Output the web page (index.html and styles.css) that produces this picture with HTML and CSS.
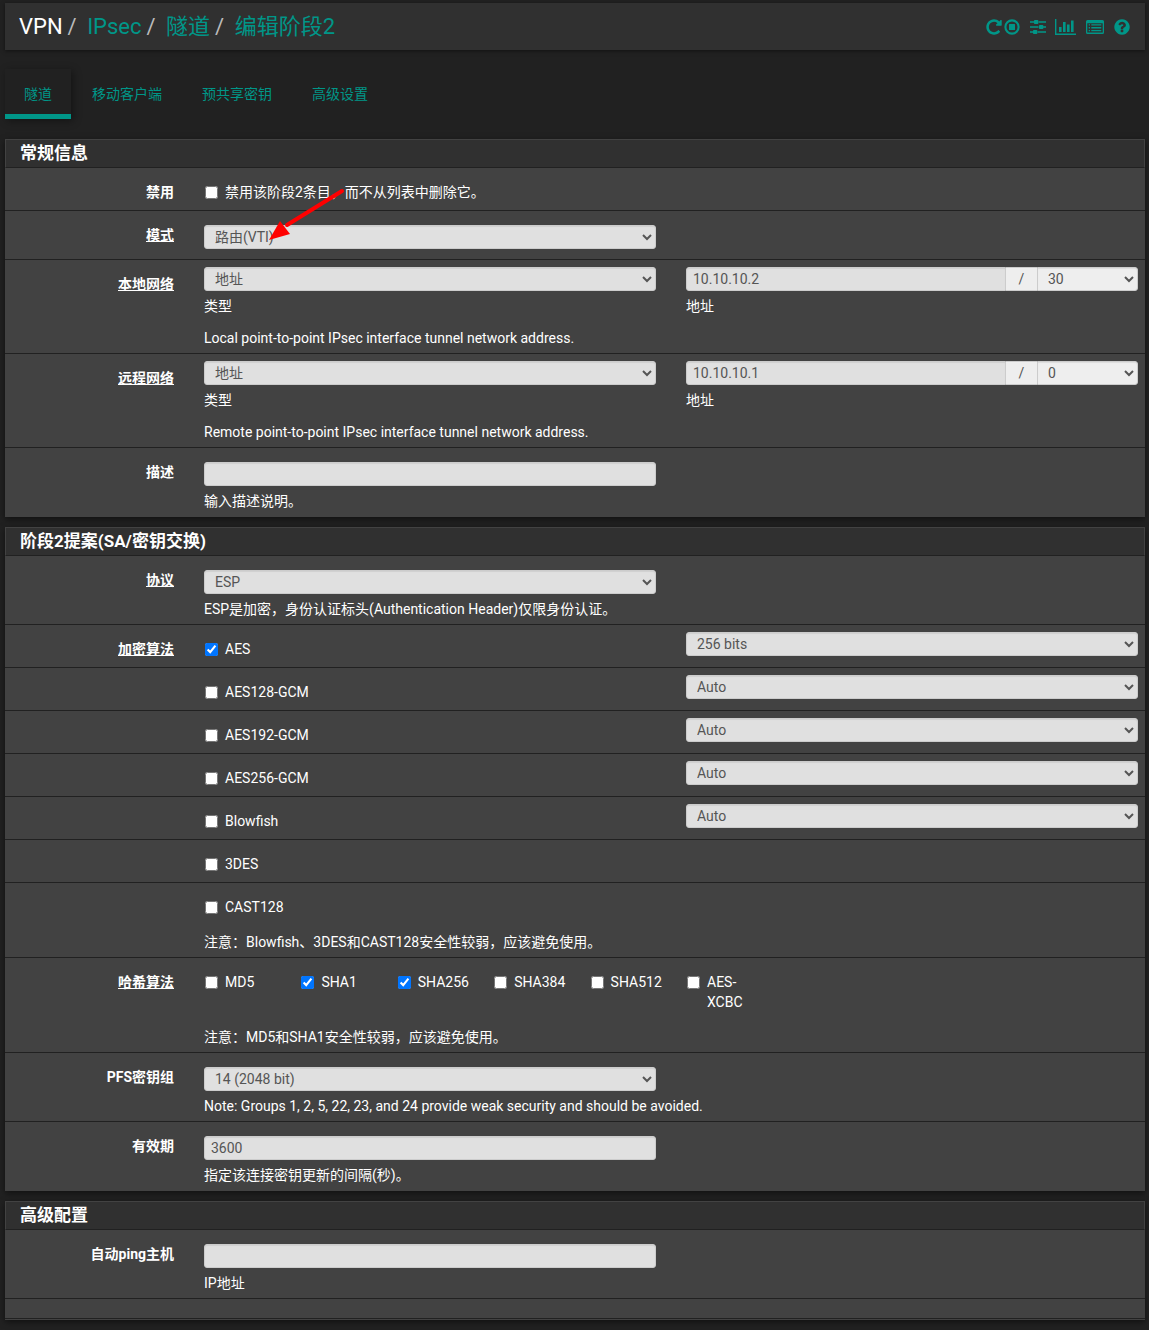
FILE: index.html
```html
<!doctype html>
<html lang="zh-CN">
    <head>
        <meta charset="utf-8">
        <meta name="viewport" content="width=device-width, initial-scale=1">
        <title>VPN: IPsec: 隧道: 编辑阶段2</title>
        <link rel="stylesheet" href="styles.css">
    </head>
    <body>
        <header class="header">
            <ol class="breadcrumb">
                <li>VPN</li>
                <li><a href="#">IPsec</a></li>
                <li><a href="#">隧道</a></li>
                <li><a href="#">编辑阶段2</a></li>
            </ol>
            <nav class="context-links">
                <a href="#" class="icon-restart" title="重启服务"><svg width="18" height="18" viewBox="0 0 1792 1792"><path d="M1664 256v448q0 26-19 45t-45 19h-448q-42 0-59-40-17-39 14-69l138-138q-148-137-349-137-104 0-198.5 40.5t-163.5 109.5-109.5 163.5-40.5 198.5 40.5 198.5 109.5 163.5 163.5 109.5 198.5 40.5q119 0 225-52t179-147q7-10 23-12 15 0 25 9l137 138q9 8 9.5 20.5t-7.5 22.5q-109 132-264 204.5t-327 72.5q-156 0-298-61t-245-164-164-245-61-298 61-298 164-245 245-164 298-61q147 0 284.5 55.5t244.5 156.5l130-129q29-31 70-14 39 17 39 59z"/></svg></a>
                <a href="#" class="icon-stop" title="停止服务"><svg width="18" height="18" viewBox="0 0 18 18"><circle cx="9" cy="9" r="6.6" fill="none" stroke="currentColor" stroke-width="2.1"/><rect x="6" y="6" width="6" height="6" rx=".5"/></svg></a>
                <a href="#" class="icon-sliders" title="相关设置"><svg width="18" height="18" viewBox="0 0 18 18"><path d="M1 3.2h4v1.6H1zM9.500 3.200H17v1.600H9.500zM1 8.200h8.500v1.600H1zM14 8.200h3v1.600h-3zM1 13.200h3v1.600H1zM8.500 13.200H17v1.600H8.500z"/><rect x="5" y="2" width="4.300" height="4" rx=".8"/><rect x="10" y="7" width="4.300" height="4" rx=".8"/><rect x="4" y="12" width="4.300" height="4" rx=".8"/></svg></a>
                <a href="#" class="icon-chart" title="状态"><svg width="21" height="18" viewBox="0 0 21 18"><path d="M0 1h1.400v14.600H21V17H0zM4 9h2.600v5H4zM8 4h2.600v10H8zM12 6.500h2.600V14H12zM16 2.500h2.600V14H16z"/></svg></a>
                <a href="#" class="icon-log" title="日志"><svg width="18" height="18" viewBox="0 0 18 18"><path fill-rule="evenodd" d="M1.500 2h15A1.500 1.500 0 0 1 18 3.500v11a1.500 1.500 0 0 1-1.500 1.500h-15A1.500 1.500 0 0 1 0 14.500v-11A1.500 1.500 0 0 1 1.500 2zM1.300 5.300v9.100h15.400V5.300z"/><path d="M2.700 6.300H4v1.300H2.700zM5.300 6.300h10v1.300h-10zM2.700 9.100H4v1.300H2.700zM5.300 9.100h10v1.300h-10zM2.700 11.900H4v1.300H2.700zM5.300 11.900h10v1.300h-10z"/></svg></a>
                <a href="#" class="icon-help" title="帮助"><svg width="18" height="18" viewBox="0 0 1792 1792"><path d="M1024 1376v-192q0-14-9-23t-23-9h-192q-14 0-23 9t-9 23v192q0 14 9 23t23 9h192q14 0 23-9t9-23zm256-672q0-88-55.5-163t-138.5-116-170-41q-243 0-371 213-15 24 8 42l132 100q7 6 19 6 16 0 25-12 53-68 86-92 34-24 86-24 48 0 85.5 26t37.5 59q0 38-20 61t-68 45q-63 28-115.5 86.5t-52.5 125.5v36q0 14 9 23t23 9h192q14 0 23-9t9-23q0-19 21.5-49.5t54.5-49.5q32-18 49-28.5t46-35 44.5-48 28-60.5 12.5-81zm384 192q0 209-103 385.5t-279.5 279.5-385.5 103-385.5-103-279.5-279.5-103-385.5 103-385.5 279.5-279.5 385.5-103 385.5 103 279.5 279.5 103 385.5z"/></svg></a>
            </nav>
        </header>

        <ul class="tabs">
            <li class="active"><a href="#">隧道</a></li>
            <li><a href="#">移动客户端</a></li>
            <li><a href="#">预共享密钥</a></li>
            <li><a href="#">高级设置</a></li>
        </ul>

        <form>
            <section class="panel">
                <h2>常规信息</h2>
                <div class="row">
                    <span class="name">禁用</span>
                    <div class="field wide">
                        <label class="check"><input type="checkbox"> 禁用该阶段2条目，而不从列表中删除它。</label>
                    </div>
                </div>
                <div class="row mode">
                    <label class="name required" for="mode">模式</label>
                    <div class="field spaced">
                        <select id="mode"><option>路由(VTI)</option></select>
                        <svg class="arrow" width="80" height="56" viewBox="0 0 80 56"><path d="M73 3L18 37" stroke="#f00" stroke-width="4" stroke-linecap="round"/><path d="M0 52L11 33L21 46z" fill="#f00"/></svg>
                    </div>
                </div>
                <div class="row">
                    <label class="name required" for="localtype">本地网络</label>
                    <div class="field">
                        <select id="localtype"><option>地址</option></select>
                        <span class="help">类型</span>
                    </div>
                    <div class="field">
                        <div class="input-group">
                            <input type="text" id="localaddr" value="10.10.10.2">
                            <span class="addon">/</span>
                            <select aria-label="掩码"><option>30</option></select>
                        </div>
                        <label class="help" for="localaddr">地址</label>
                    </div>
                    <p class="note">Local point-to-point IPsec interface tunnel network address.</p>
                </div>
                <div class="row">
                    <label class="name required" for="remotetype">远程网络</label>
                    <div class="field">
                        <select id="remotetype"><option>地址</option></select>
                        <span class="help">类型</span>
                    </div>
                    <div class="field">
                        <div class="input-group">
                            <input type="text" id="remoteaddr" value="10.10.10.1">
                            <span class="addon">/</span>
                            <select aria-label="掩码"><option>0</option></select>
                        </div>
                        <label class="help" for="remoteaddr">地址</label>
                    </div>
                    <p class="note">Remote point-to-point IPsec interface tunnel network address.</p>
                </div>
                <div class="row">
                    <label class="name" for="descr">描述</label>
                    <div class="field spaced">
                        <input type="text" id="descr">
                        <span class="help">输入描述说明。</span>
                    </div>
                </div>
            </section>

            <section class="panel">
                <h2>阶段2提案(SA/密钥交换)</h2>
                <div class="row">
                    <label class="name required" for="protocol">协议</label>
                    <div class="field spaced">
                        <select id="protocol"><option>ESP</option></select>
                        <span class="help">ESP是加密，身份认证标头(Authentication Header)仅限身份认证。</span>
                    </div>
                </div>
                <div class="row">
                    <span class="name required">加密算法</span>
                    <div class="field"><label class="check"><input type="checkbox" checked> AES</label></div>
                    <div class="field"><select aria-label="AES"><option>256 bits</option></select></div>
                </div>
                <div class="row">
                    <span class="name"></span>
                    <div class="field"><label class="check"><input type="checkbox"> AES128-GCM</label></div>
                    <div class="field"><select aria-label="AES128-GCM"><option>Auto</option></select></div>
                </div>
                <div class="row">
                    <span class="name"></span>
                    <div class="field"><label class="check"><input type="checkbox"> AES192-GCM</label></div>
                    <div class="field"><select aria-label="AES192-GCM"><option>Auto</option></select></div>
                </div>
                <div class="row">
                    <span class="name"></span>
                    <div class="field"><label class="check"><input type="checkbox"> AES256-GCM</label></div>
                    <div class="field"><select aria-label="AES256-GCM"><option>Auto</option></select></div>
                </div>
                <div class="row">
                    <span class="name"></span>
                    <div class="field"><label class="check"><input type="checkbox"> Blowfish</label></div>
                    <div class="field"><select aria-label="Blowfish"><option>Auto</option></select></div>
                </div>
                <div class="row">
                    <span class="name"></span>
                    <div class="field"><label class="check"><input type="checkbox"> 3DES</label></div>
                </div>
                <div class="row">
                    <span class="name"></span>
                    <div class="field"><label class="check"><input type="checkbox"> CAST128</label></div>
                    <p class="note">注意：Blowfish、3DES和CAST128安全性较弱，应该避免使用。</p>
                </div>
                <div class="row">
                    <span class="name required">哈希算法</span>
                    <div class="field wide hashes">
                        <label class="check"><input type="checkbox"> MD5</label>
                        <label class="check"><input type="checkbox" checked> SHA1</label>
                        <label class="check"><input type="checkbox" checked> SHA256</label>
                        <label class="check"><input type="checkbox"> SHA384</label>
                        <label class="check"><input type="checkbox"> SHA512</label>
                        <label class="check"><input type="checkbox"> AES-XCBC</label>
                    </div>
                    <p class="note">注意：MD5和SHA1安全性较弱，应该避免使用。</p>
                </div>
                <div class="row">
                    <label class="name" for="pfsgroup">PFS密钥组</label>
                    <div class="field spaced">
                        <select id="pfsgroup"><option>14 (2048 bit)</option></select>
                        <span class="help">Note: Groups 1, 2, 5, 22, 23, and 24 provide weak security and should be avoided.</span>
                    </div>
                </div>
                <div class="row">
                    <label class="name" for="lifetime">有效期</label>
                    <div class="field spaced">
                        <input type="text" id="lifetime" value="3600">
                        <span class="help">指定该连接密钥更新的间隔(秒)。</span>
                    </div>
                </div>
            </section>

            <section class="panel">
                <h2>高级配置</h2>
                <div class="row">
                    <label class="name" for="pinghost">自动ping主机</label>
                    <div class="field spaced">
                        <input type="text" id="pinghost">
                        <span class="help">IP地址</span>
                    </div>
                </div>
                <div class="panel-end"></div>
            </section>
        </form>
    </body>
</html>
```
FILE: styles.css
```css
* {
    box-sizing: border-box;
}

body {
    margin: 0;
    padding: 3px 4px 10px 5px;
    background: #212121;
    color: #fff;
    font-family: Roboto, "Noto Sans CJK SC", sans-serif;
    font-size: 14px;
    line-height: 20px;
}

a {
    color: #009688;
    text-decoration: none;
}

/* header */

.header {
    display: flex;
    justify-content: space-between;
    align-items: center;
    height: 47px;
    padding: 0 14px;
    background: #303030;
    box-shadow: 0 1px 4px rgba(0, 0, 0, .5);
}

.breadcrumb {
    display: flex;
    margin: 0;
    padding: 0;
    list-style: none;
    font-size: 22px;
    line-height: 32px;
}

.breadcrumb li + li::before {
    content: "/\00a0";
    padding: 0 5px;
    color: #bbb;
}

.context-links {
    display: flex;
    align-items: center;
}

.context-links svg {
    display: block;
    fill: currentColor;
}

.icon-sliders,
.icon-chart,
.icon-log {
    margin-left: 8px;
}

.icon-log {
    margin-left: 10px;
}

.icon-help {
    margin-left: 9px;
}

/* tabs */

.tabs {
    display: flex;
    gap: 2px;
    margin: 19px 0 20px;
    padding: 0;
    list-style: none;
}

.tabs a {
    display: block;
    padding: 15px 19px 10px;
    border-bottom: 5px solid transparent;
}

.tabs .active a {
    border-bottom-color: #009688;
    box-shadow: 2px 2px 8px rgba(0, 0, 0, .4);
}

/* panels */

.panel {
    margin-bottom: 10px;
    background: #424242;
    box-shadow: 0 2px 6px rgba(0, 0, 0, .5);
}

.panel h2 {
    margin: 0;
    height: 29px;
    padding: 0 14px;
    border: 1px solid #424242;
    border-bottom-color: #212121;
    background: #303030;
    font-size: 17px;
    font-weight: 700;
    line-height: 27px;
}

.row {
    display: grid;
    grid-template-columns: 169px 1fr 1fr;
    column-gap: 30px;
    padding: 7px 7px 5px 0;
    border-bottom: 1px solid #212121;
}

.row:last-child {
    border-bottom-color: transparent;
}

.panel-end {
    height: 21px;
    border-bottom: 1px solid #424242;
    box-shadow: inset 0 -1px #212121;
}

.name {
    padding-top: 7px;
    font-weight: 700;
    text-align: right;
}

.required {
    text-decoration: underline;
}

.field {
    position: relative;
    min-width: 0;
}

.spaced {
    padding-top: 7px;
}

.mode {
    padding-bottom: 10px;
}

.wide {
    grid-column: 2 / 4;
}

.help {
    display: block;
    margin-top: 5px;
    white-space: nowrap;
}

.note {
    grid-column: 2 / 4;
    margin: 12px 0 0;
}

.check {
    display: flex;
    gap: 7px;
    padding: 7px 0 3px;
}

.check input {
    flex: none;
    width: 13px;
    height: 13px;
    margin: 4px 0 0 1px;
}

.hashes {
    display: grid;
    grid-template-columns: repeat(10, minmax(0, 1fr));
    column-gap: 30px;
}

input[type=text],
select {
    display: block;
    width: 100%;
    height: 24px;
    padding: 0 6px;
    border: 1px solid #ccc;
    border-radius: 3px;
    background-color: #e0e0e0;
    box-shadow: inset 0 1px 1px rgba(0, 0, 0, .075);
    color: #555;
    font: inherit;
}

.input-group {
    display: flex;
}

.input-group input[type=text] {
    flex: 1;
    min-width: 0;
    border-radius: 3px 0 0 3px;
}

.input-group .addon {
    width: 31px;
    border: solid #ccc;
    border-width: 1px 0;
    background: #eee;
    color: #555;
    line-height: 22px;
    text-align: center;
}

.input-group select {
    width: 101px;
    border-radius: 0 3px 3px 0;
    background-color: #eee;
}

.arrow {
    position: absolute;
    top: -30px;
    left: 65px;
    fill: none;
}
```
